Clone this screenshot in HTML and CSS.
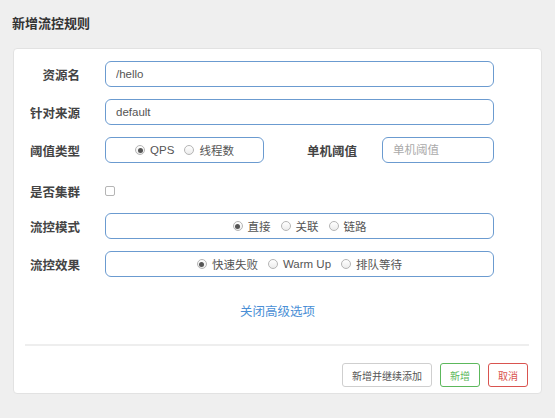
FILE: index.html
```html
<html>
<head>
<meta charset="utf-8">
<title>新增流控规则</title>
<link rel="stylesheet" href="styles.css">
</head>
<body>

<div class="title">新增流控规则</div>

<div class="card">

  <div class="row">
    <label class="label">资源名</label>
    <input class="input wide" type="text" value="/hello">
  </div>

  <div class="row">
    <label class="label">针对来源</label>
    <input class="input wide" type="text" value="default">
  </div>

  <div class="row">
    <label class="label">阈值类型</label>
    <div class="box small">
      <label class="opt"><input class="radio" type="radio" name="grade" checked>QPS</label>
      <label class="opt"><input class="radio" type="radio" name="grade">线程数</label>
    </div>
    <label class="label second">单机阈值</label>
    <input class="input count" type="text" placeholder="单机阈值">
  </div>

  <div class="row cluster">
    <label class="label">是否集群</label>
    <input class="check" type="checkbox">
  </div>

  <div class="row">
    <label class="label">流控模式</label>
    <div class="box wide">
      <label class="opt"><input class="radio" type="radio" name="mode" checked>直接</label>
      <label class="opt"><input class="radio" type="radio" name="mode">关联</label>
      <label class="opt"><input class="radio" type="radio" name="mode">链路</label>
    </div>
  </div>

  <div class="row">
    <label class="label">流控效果</label>
    <div class="box wide">
      <label class="opt"><input class="radio" type="radio" name="effect" checked>快速失败</label>
      <label class="opt"><input class="radio" type="radio" name="effect">Warm Up</label>
      <label class="opt"><input class="radio" type="radio" name="effect">排队等待</label>
    </div>
  </div>

  <div class="toggle"><a href="#">关闭高级选项</a></div>

  <div class="line"></div>

  <div class="footer">
    <button class="btn">新增并继续添加</button>
    <button class="btn green">新增</button>
    <button class="btn red">取消</button>
  </div>

</div>

</body>
</html>
```

FILE: styles.css
```css
body {
  margin: 0;
  background-color: #efefef;
  font-family: "Liberation Sans", "Noto Sans CJK SC", sans-serif;
}

.title {
  height: 48px;
  line-height: 48px;
  padding-left: 12px;
  font-size: 13px;
  font-weight: bold;
  color: #333;
}

.card {
  margin: 0 13px;
  height: 346px;
  background-color: #fff;
  border: 1px solid #e2e2e2;
  border-radius: 4px;
  padding-top: 12px;
  box-sizing: border-box;
}

.row {
  display: flex;
  align-items: center;
  height: 26px;
  margin-bottom: 12px;
}

.row.cluster {
  padding-top: 3px;
  margin-bottom: 9px;
}

.label {
  width: 66px;
  margin-right: 25px;
  text-align: right;
  font-size: 12.5px;
  font-weight: bold;
  color: #444;
  flex-shrink: 0;
}

.label.second {
  width: 93px;
}

.input {
  height: 26px;
  box-sizing: border-box;
  border: 1px solid #6b9bd0;
  border-radius: 6px;
  padding: 0 10px;
  font-family: "Liberation Sans", "Noto Sans CJK SC", sans-serif;
  font-size: 11.5px;
  color: #555;
  outline: none;
}

.input::placeholder {
  color: #aaa;
}

.wide {
  width: 389px;
}

.count {
  width: 112px;
}

.box {
  height: 26px;
  box-sizing: border-box;
  border: 1px solid #6b9bd0;
  border-radius: 6px;
  display: flex;
  align-items: center;
  justify-content: center;
  gap: 10px;
}

.box.small {
  width: 159px;
}

.opt {
  display: flex;
  align-items: center;
  font-size: 11.5px;
  color: #555;
}

.radio {
  appearance: none;
  -webkit-appearance: none;
  width: 10px;
  height: 10px;
  margin: 0 5px 0 0;
  border: 1px solid #b5b5b5;
  border-radius: 50%;
  background: linear-gradient(#fff, #ececec);
  box-sizing: border-box;
  position: relative;
}

.radio:checked:after {
  content: "";
  position: absolute;
  left: 1.5px;
  top: 1.5px;
  width: 5px;
  height: 5px;
  border-radius: 50%;
  background-color: #555;
}

.check {
  appearance: none;
  -webkit-appearance: none;
  width: 10px;
  height: 10px;
  margin: 0;
  border: 1px solid #b5b5b5;
  border-radius: 2px;
  background: #fff;
  box-sizing: border-box;
}

.toggle {
  height: 46px;
  line-height: 46px;
  text-align: center;
  font-size: 12.5px;
}

.toggle a {
  color: #4a8fd6;
  text-decoration: none;
}

.line {
  margin: 9px 12px 0 11px;
  height: 2px;
  background-color: #eeeeee;
}

.footer {
  display: flex;
  justify-content: flex-end;
  gap: 8px;
  margin-top: 17px;
  padding-right: 13px;
}

.btn {
  height: 24px;
  padding: 0 9px;
  border: 1px solid #cfcfcf;
  border-radius: 3px;
  background-color: #fff;
  font-family: "Liberation Sans", "Noto Sans CJK SC", sans-serif;
  font-size: 10px;
  color: #555;
}

.btn.green {
  border-color: #5cb85c;
  color: #5cb85c;
}

.btn.red {
  border-color: #d9534f;
  color: #d9534f;
}
```
